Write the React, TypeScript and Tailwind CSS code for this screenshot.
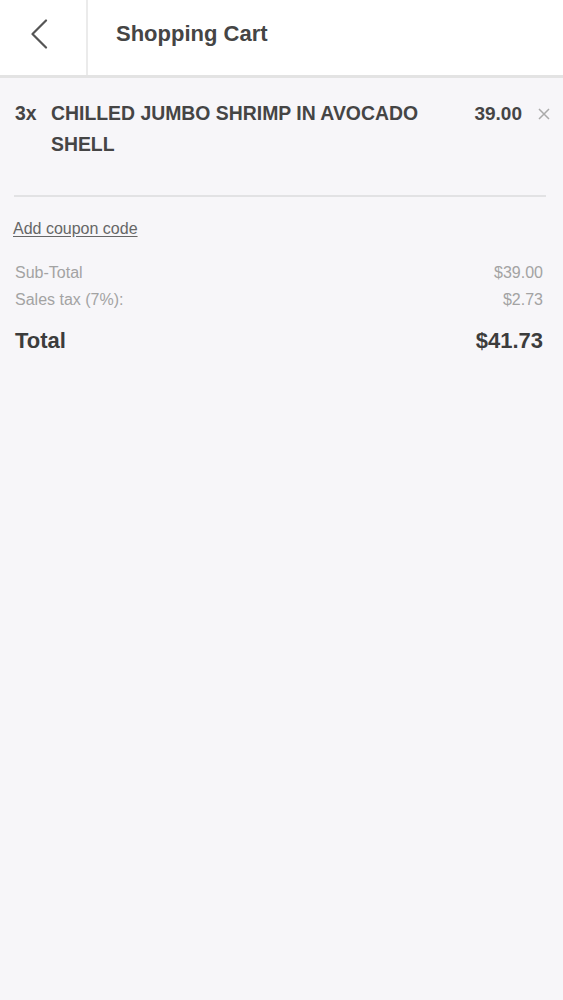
import React from "react";

export default function App() {
  return (
    <div
      className="min-h-[1000px] w-full bg-[#f7f6f9] text-[#444]"
      style={{ fontFamily: '"Liberation Sans", Arial, sans-serif' }}
    >
      <header className="flex h-[78px] bg-white border-b-[3px] border-[#e3e3e3]">
        <button className="flex w-[88px] items-center justify-center border-r-2 border-[#ebebeb] pb-[8px]">
          <svg width="20" height="30" viewBox="0 0 20 30" fill="none" className="ml-[-8px]">
            <path d="M17 1.5 L3.5 15 L17 28.5" stroke="#555" strokeWidth="2.2" strokeLinecap="round" strokeLinejoin="round" />
          </svg>
        </button>
        <h1 className="flex items-center pl-[28px] pb-[8px] text-[22px] font-bold text-[#454545]">Shopping Cart</h1>
      </header>

      <main className="px-[14px]">
        <div className="flex pt-[20px] text-[19.4px] font-bold leading-[31px] text-[#454545]">
          <div className="w-[37px] pl-[1px]">3x</div>
          <div className="flex-1 pr-[30px]">CHILLED JUMBO SHRIMP IN AVOCADO SHELL</div>
          <div className="text-[19px]">39.00</div>
          <button className="ml-[15px] mr-[-1px] mt-[10px] flex h-[13px] w-[13px] items-start justify-center">
            <svg width="12" height="12" viewBox="0 0 12 12">
              <path d="M1 1 L11 11 M11 1 L1 11" stroke="#aaa" strokeWidth="1.5" />
            </svg>
          </button>
        </div>

        <div className="mt-[35px] mr-[3px] h-[2px] bg-[#e2e2e4]" />

        <div className="mt-[20px]">
          <a className="text-[16px] leading-[20px] text-[#666] underline underline-offset-[2px] ml-[-1px]">Add coupon code</a>
        </div>

        <div className="mt-[18px] pr-[6px] text-[16px] leading-[27px] text-[#a3a3a3]">
          <div className="flex justify-between pl-[1px]">
            <span>Sub-Total</span>
            <span>$39.00</span>
          </div>
          <div className="flex justify-between pl-[1px]">
            <span>Sales tax (7%):</span>
            <span>$2.73</span>
          </div>
        </div>

        <div className="mt-[13px] flex justify-between pl-[1px] pr-[6px] text-[22px] font-bold leading-[30px] text-[#3c3c3c]">
          <span>Total</span>
          <span>$41.73</span>
        </div>
      </main>
    </div>
  );
}
